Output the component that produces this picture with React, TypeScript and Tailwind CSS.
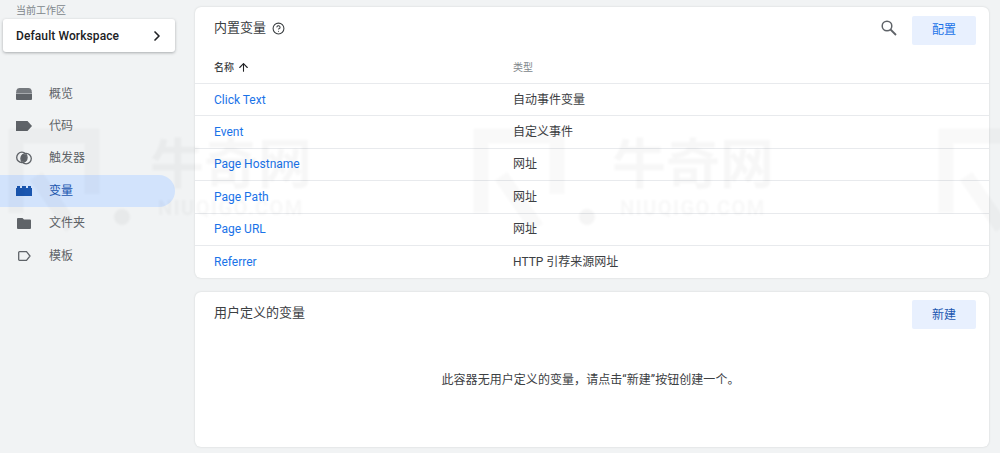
import React from "react";
import { ArrowUp, ChevronRight, CircleHelp } from "lucide-react";

const FONT = "font-['Roboto','Noto_Sans_CJK_SC',sans-serif]";

const ROWS = [
  { name: "Click Text", type: "自动事件变量" },
  { name: "Event", type: "自定义事件" },
  { name: "Page Hostname", type: "网址" },
  { name: "Page Path", type: "网址" },
  { name: "Page URL", type: "网址" },
  { name: "Referrer", type: "HTTP 引荐来源网址" },
];

function OverviewIcon() {
  return (
    <svg width="16" height="12" viewBox="0 0 16 12" fill="#5f6368">
      <path d="M3.500 0h9c1.500 0 2.500.8 3 2.200L16 5H0l.5-2.800C1 .8 2 0 3.500 0z" opacity="0.85" />
      <path d="M0 5.600h16V11a1 1 0 0 1-1 1H1a1 1 0 0 1-1-1z" />
    </svg>
  );
}

function TagIcon() {
  return (
    <svg width="16" height="10" viewBox="0 0 16 10" fill="#5f6368">
      <path d="M0 0h11.500L16 5l-4.500 5H0z" />
    </svg>
  );
}

function TriggerIcon() {
  return (
    <svg width="16" height="14" viewBox="0 0 16 14" fill="none">
      <path d="M8 2.900a5.500 5.500 0 0 1 0 8.200 5.500 5.500 0 0 1 0-8.200z" fill="#5f6368" />
      <circle cx="5.900" cy="6.400" r="5.200" stroke="#5f6368" strokeWidth="1.300" />
      <circle cx="10.100" cy="7.600" r="5.200" stroke="#5f6368" strokeWidth="1.300" />
      <ellipse cx="8" cy="7" rx="3" ry="3.800" fill="#5f6368" />
    </svg>
  );
}

function VariableIcon() {
  return (
    <svg width="16" height="10" viewBox="0 0 16 10" fill="#1a56b0">
      <path d="M0 2h1V0h3v2h2V0h4v2h2V0h3v2h1v8H0z" />
    </svg>
  );
}

function FolderIcon() {
  return (
    <svg width="14" height="11" viewBox="0 0 14 11" fill="#5f6368">
      <path d="M1 0h4.500l1.500 1.500h6a1 1 0 0 1 1 1V10a1 1 0 0 1-1 1H1a1 1 0 0 1-1-1V1a1 1 0 0 1 1-1z" />
    </svg>
  );
}

function TemplateIcon() {
  return (
    <svg width="13" height="10" viewBox="0 0 13 10" fill="none">
      <path d="M1.500.7h7L12 5 8.500 9.300h-7a.8.8 0 0 1-.8-.8v-7a.8.8 0 0 1 .8-.8z" stroke="#5f6368" strokeWidth="1.300" />
    </svg>
  );
}

function SearchIcon() {
  return (
    <svg className="mb-[3px]" width="16" height="16" viewBox="0 0 16 16" fill="none" stroke="#5f6368">
      <circle cx="6" cy="6" r="4.800" strokeWidth="1.500" />
      <path d="M9.500 9.500L15 15" strokeWidth="1.800" />
    </svg>
  );
}

const NAV = [
  { label: "概览", icon: <OverviewIcon /> },
  { label: "代码", icon: <TagIcon /> },
  { label: "触发器", icon: <TriggerIcon /> },
  { label: "变量", icon: <VariableIcon />, active: true },
  { label: "文件夹", icon: <FolderIcon /> },
  { label: "模板", icon: <TemplateIcon /> },
];

function Watermark({ left }: { left: string }) {
  return (
    <div className={`absolute ${left} top-[136px] flex flex-col items-center text-black/[0.03] blur-[1px] pointer-events-none select-none`}>
      <span className="text-[54px] leading-[60px] font-bold">牛奇网</span>
      <span className="text-[20px] leading-[24px] font-bold tracking-[1.500px]">NIUQIGO.COM</span>
    </div>
  );
}

function WatermarkLogo({ left }: { left: string }) {
  return (
    <svg className={`absolute ${left} top-[128px] blur-[1px] pointer-events-none`} width="124" height="104" viewBox="0 0 124 104" fill="none" stroke="black" strokeOpacity="0.025" strokeWidth="15">
      <path d="M8 85V8H84V66" />
      <path d="M28 48L64 100" />
      <circle cx="114" cy="89" r="8" fill="black" fillOpacity="0.04" stroke="none" />
    </svg>
  );
}

export default function App() {
  return (
    <div className={`relative flex h-[453px] w-[1000px] overflow-hidden bg-[#f1f3f4] ${FONT}`}>
      {/* Sidebar */}
      <aside className="w-[195px] shrink-0">
        <div className="pl-[16px] pt-[4px] text-[10px] leading-[13px] text-[#80868b]">当前工作区</div>
        <div className="ml-[3px] mt-[2px] flex h-[33px] w-[172px] items-center justify-between rounded-[3px] bg-white pl-[13px] pr-[10px] shadow-[0_1px_3px_rgba(60,64,67,0.4)]">
          <span className="text-[12px] font-medium tracking-[0.1px] text-[#202124]">Default Workspace</span>
          <ChevronRight className="h-[16px] w-[16px] text-[#202124]" strokeWidth={2.500} />
        </div>
        <nav className="mt-[25.500px] flex w-[175px] flex-col">
          {NAV.map((item) => (
            <div
              key={item.label}
              className={`flex h-[32.4px] items-center rounded-r-full ${item.active ? "bg-[#d2e3fc] text-[#1a56b0]" : "text-[#5f6368]"}`}
            >
              <div className="flex w-[49px] justify-center pr-[1px]">{item.icon}</div>
              <span className="text-[12px]">{item.label}</span>
            </div>
          ))}
        </nav>
      </aside>

      {/* Main */}
      <main className="flex w-[794px] flex-col gap-[14px] pt-[7px]">
        <section className="h-[271px] rounded-[6px] bg-white shadow-[0_0_2px_rgba(60,64,67,0.2)]">
          <div className="flex h-[45px] items-center justify-between pl-[19px] pr-[13px]">
            <div className="flex items-center gap-[6px] pb-[3px] text-[#3c4043]">
              <span className="text-[13px]">内置变量</span>
              <CircleHelp className="h-[13px] w-[13px]" strokeWidth={2} />
            </div>
            <div className="flex items-center gap-[15px]">
              <SearchIcon />
              <button type="button" className="mt-[1px] flex h-[29px] w-[64px] items-center justify-center rounded-[2px] bg-[#e8f0fe] text-[12px] text-[#1a73e8]">
                配置
              </button>
            </div>
          </div>
          <div className="flex h-[32px] items-center border-b border-[#e8eaed] pl-[19px]">
            <div className="flex w-[299px] items-center gap-[3px] text-[10px] font-medium text-[#3c4043]">
              名称
              <ArrowUp className="h-[13px] w-[13px] text-[#202124]" strokeWidth={2} />
            </div>
            <div className="text-[10px] text-[#80868b]">类型</div>
          </div>
          {ROWS.map((row, i) => (
            <div
              key={row.name}
              className={`flex h-[32.4px] items-center pl-[19px] text-[12px] ${i < ROWS.length - 1 ? "border-b border-[#e8eaed]" : ""}`}
            >
              <span className="w-[299px] text-[#1a73e8]">{row.name}</span>
              <span className="text-[#3c4043]">{row.type}</span>
            </div>
          ))}
        </section>

        <section className="h-[155px] rounded-[6px] bg-white shadow-[0_0_2px_rgba(60,64,67,0.2)]">
          <div className="flex items-start justify-between pl-[19px] pr-[13px] pt-[8px]">
            <span className="pt-[3px] text-[13px] text-[#3c4043]">用户定义的变量</span>
            <button type="button" className="flex h-[29px] w-[64px] items-center justify-center rounded-[2px] bg-[#e8f0fe] text-[12px] text-[#1a56b0]">
              新建
            </button>
          </div>
          <p className="mt-[42px] pr-[3px] text-center text-[12px] tracking-[0.06px] text-[#3c4043]">此容器无用户定义的变量，请点击“新建”按钮创建一个。</p>
        </section>
      </main>

      {/* Watermark over the page */}
      <Watermark left="left-[150px]" />
      <Watermark left="left-[612px]" />
      <WatermarkLogo left="left-[473px]" />
      <WatermarkLogo left="left-[8px]" />
      <WatermarkLogo left="left-[938px]" />
    </div>
  );
}
